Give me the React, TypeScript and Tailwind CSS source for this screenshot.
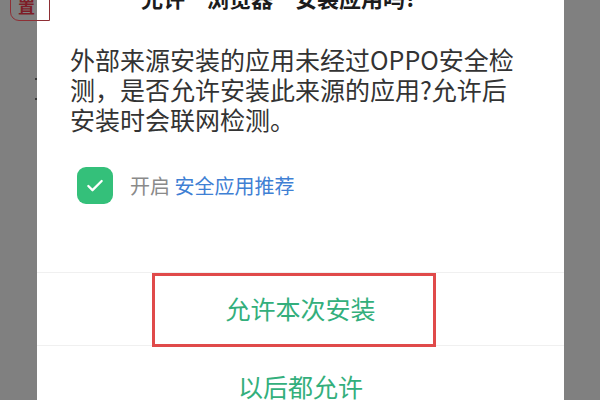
import { Check } from "lucide-react";

const font = { fontFamily: '"Noto Sans CJK SC", "Noto Sans", sans-serif' };

function Stamp() {
  // red seal on the page behind the dimmed overlay
  return (
    <div className="absolute left-[10px] top-[-10px] w-[40px] h-[31px] rounded-bl-[9px] border border-[#8e2f35] flex justify-start pl-[7px] items-end pb-[6px]">
      <span className="text-[17px] leading-[17px] font-bold text-[#7d1d27]">置</span>
    </div>
  );
}

function InstallDialog() {
  return (
    <div className="w-[527px] min-h-full bg-white flex flex-col">
      <div className="shrink-0 mt-[-15px] h-[24px] pl-[104px] text-[22px] leading-[24px] font-bold text-[#1c1c1c] whitespace-nowrap">
        允许“浏览器”安装应用吗?
      </div>

      <p className="shrink-0 mt-[35px] px-[33px] text-[25px] leading-[30px] text-[#333] whitespace-nowrap">
        外部来源安装的应用未经过OPPO安全检
        <br />
        测，是否允许安装此来源的应用?允许后
        <br />
        安装时会联网检测。
      </p>

      <div className="shrink-0 mt-[33px] pl-[40px] flex items-center gap-[17px]">
        <div className="w-[36px] h-[37px] rounded-[9px] bg-[#34c07a] flex items-center justify-center">
          <Check className="w-[20px] h-[20px] text-white" strokeWidth={2.75} />
        </div>
        <span className="text-[20px] leading-[24px] text-[#8a8a8a]">
          开启 <span className="text-[#3f80d4]">安全应用推荐</span>
        </span>
      </div>

      <div className="shrink-0 mt-[68px] border-t border-[#f0f0f0]" />
      <div className="shrink-0 relative h-[72px] flex items-center justify-center text-[25px] text-[#33af7c]">
        允许本次安装
        <div className="absolute left-[115px] top-0 w-[284px] h-[74px] border-[3px] border-[#e04a4a]" />
      </div>
      <div className="shrink-0 border-t border-[#f0f0f0]" />
      <div className="shrink-0 h-[82px] flex items-center justify-center text-[25px] text-[#33af7c]">
        以后都允许
      </div>
    </div>
  );
}

export default function App() {
  return (
    <div style={font} className="relative w-[600px] h-[400px] overflow-hidden bg-[#808080] pl-[37px]">
      <Stamp />
      <span className="absolute left-[35px] top-[78px] w-[2px] h-[2px] rounded-full bg-[#222]" />
      <span className="absolute left-[35px] top-[98px] w-[2px] h-[2px] rounded-full bg-[#222]" />
      <InstallDialog />
    </div>
  );
}
